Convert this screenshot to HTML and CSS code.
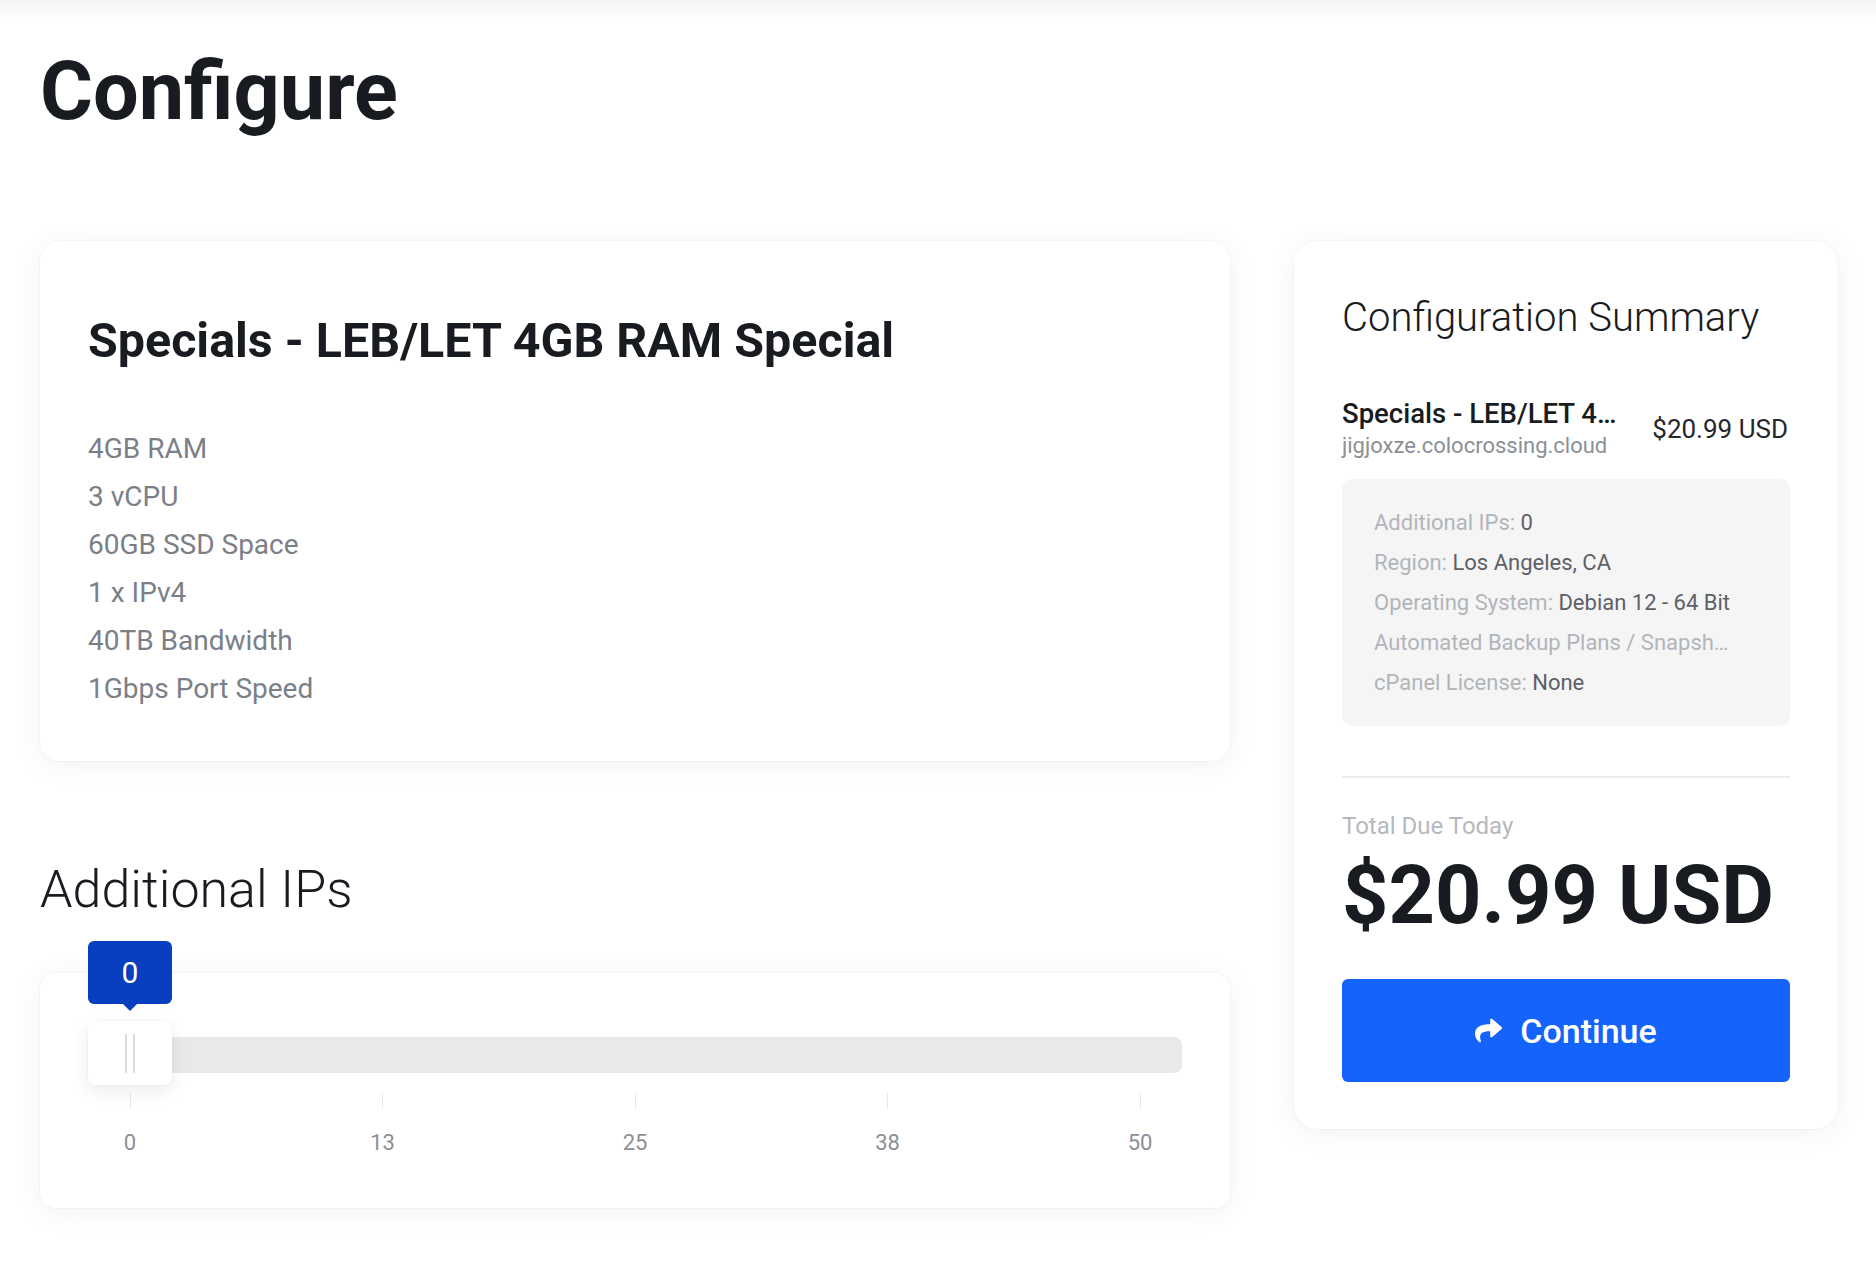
FILE: index.html
```html
<!DOCTYPE html>
<html lang="en">
<head>
<meta charset="utf-8">
<title>Configure</title>
<link rel="stylesheet" href="styles.css">
</head>
<body>
<div class="page">
  <h1 class="page-title">Configure</h1>
  <div class="layout">
    <main class="main-col">
      <section class="card product-card">
        <h2 class="product-title">Specials - LEB/LET 4GB RAM Special</h2>
        <ul class="features">
          <li>4GB RAM</li>
          <li>3 vCPU</li>
          <li>60GB SSD Space</li>
          <li>1 x IPv4</li>
          <li>40TB Bandwidth</li>
          <li>1Gbps Port Speed</li>
        </ul>
      </section>

      <h3 class="section-title">Additional IPs</h3>
      <section class="card slider-card">
        <div class="slider">
          <div class="track"></div>
          <div class="handle">
            <span class="grip"></span><span class="grip"></span>
            <div class="bubble">0</div>
          </div>
        </div>
        <div class="scale">
          <div class="tick"><span class="tick-line"></span><span class="tick-label">0</span></div>
          <div class="tick"><span class="tick-line"></span><span class="tick-label">13</span></div>
          <div class="tick"><span class="tick-line"></span><span class="tick-label">25</span></div>
          <div class="tick"><span class="tick-line"></span><span class="tick-label">38</span></div>
          <div class="tick"><span class="tick-line"></span><span class="tick-label">50</span></div>
        </div>
      </section>
    </main>

    <aside class="card summary">
      <h3 class="summary-title">Configuration Summary</h3>
      <div class="item">
        <div class="item-info">
          <div class="item-name">Specials - LEB/LET 4GB RAM Special</div>
          <div class="item-domain">jigjoxze.colocrossing.cloud</div>
        </div>
        <div class="item-price">$20.99 USD</div>
      </div>
      <div class="details">
        <div class="details-row">Additional IPs: <span class="details-value">0</span></div>
        <div class="details-row">Region: <span class="details-value">Los Angeles, CA</span></div>
        <div class="details-row">Operating System: <span class="details-value">Debian 12 - 64 Bit</span></div>
        <div class="details-row">Automated Backup Plans / Snapshots: <span class="details-value">None</span></div>
        <div class="details-row">cPanel License: <span class="details-value">None</span></div>
      </div>
      <div class="divider"></div>
      <div class="total-label">Total Due Today</div>
      <div class="total-amount">$20.99 USD</div>
      <button class="continue" type="button">
        <svg class="continue-icon" viewBox="0 0 512 512" aria-hidden="true"><path d="M503.691 189.836L327.687 37.851C312.281 24.546 288 35.347 288 56.015v80.053C127.371 137.907 0 170.1 0 322.326c0 61.441 39.581 122.309 83.333 154.132 13.653 9.931 33.111-2.533 28.077-18.631C66.066 312.814 132.917 274.316 288 272.085V360c0 20.7 24.3 31.453 39.687 18.164l176.004-152c11.071-9.562 11.086-26.753 0-36.328z"/></svg>
        <span>Continue</span>
      </button>
    </aside>
  </div>
</div>
</body>
</html>
```

FILE: styles.css
```css
* { box-sizing: border-box; }

body {
  margin: 0;
  background: #ffffff;
  font-family: Roboto, "Noto Sans", "Liberation Sans", sans-serif;
  color: #181b20;
}

.page {
  padding: 0 38px 60px 40px;
  background: linear-gradient(#f3f3f3, #ffffff 20px) no-repeat;
}

.page-title {
  margin: 0;
  padding-top: 43px;
  font-size: 81px;
  line-height: 98px;
  font-weight: 700;
}

.layout {
  display: flex;
  align-items: flex-start;
  gap: 64px;
  margin-top: 100px;
}

.main-col {
  flex: 1;
  min-width: 0;
}

.card {
  background: #ffffff;
  border-radius: 20px;
  box-shadow: 0 0 0 1px rgba(0, 0, 0, 0.025), 0 4px 30px rgba(0, 0, 0, 0.055);
}

/* product card */
.product-card {
  padding: 70px 48px 48px;
}

.product-title {
  margin: 0;
  font-size: 48.4px;
  line-height: 60px;
  font-weight: 700;
}

.features {
  list-style: none;
  margin: 54px 0 0;
  padding: 0;
  font-size: 28px;
  line-height: 48px;
  color: #7b8088;
}

/* additional IPs */
.section-title {
  margin: 98px 0 0;
  font-size: 52px;
  line-height: 62px;
  font-weight: 300;
}

.slider-card {
  margin-top: 52px;
  padding: 48px 48px 51px;
  border-radius: 16px;
}

.slider {
  position: relative;
  padding: 16px 0 12px;
}

.track {
  height: 36px;
  background: #e8e9eb;
  border-radius: 8px;
}

.handle {
  position: absolute;
  left: 0;
  top: 0;
  width: 84px;
  height: 64px;
  background: #ffffff;
  border-radius: 8px;
  box-shadow: 0 0 0 1px rgba(0, 0, 0, 0.02), 0 6px 18px rgba(0, 0, 0, 0.08);
  display: flex;
  align-items: center;
  justify-content: center;
  gap: 6px;
}

.grip {
  width: 2px;
  height: 39px;
  background: #dcdde0;
}

.bubble {
  position: absolute;
  left: 0;
  bottom: calc(100% + 17px);
  width: 84px;
  height: 63px;
  background: #083fc1;
  color: #ffffff;
  border-radius: 6px;
  font-size: 30px;
  display: flex;
  align-items: center;
  justify-content: center;
}

.bubble::after {
  content: "";
  position: absolute;
  left: 50%;
  top: 100%;
  margin-left: -7px;
  border-left: 7px solid transparent;
  border-right: 7px solid transparent;
  border-top: 7px solid #083fc1;
}

.scale {
  display: flex;
  justify-content: space-between;
  margin-top: 8px;
}

.tick {
  width: 84px;
  display: flex;
  flex-direction: column;
  align-items: center;
}

.tick-line {
  width: 1px;
  height: 15px;
  background: #e6e7e9;
}

.tick-label {
  margin-top: 21px;
  font-size: 22px;
  line-height: 28px;
  color: #8c9096;
}

/* summary */
.summary {
  width: 544px;
  flex: none;
  padding: 53px 48px 47px;
  border-radius: 24px;
}

.summary-title {
  margin: 0;
  font-size: 40px;
  line-height: 48px;
  font-weight: 300;
}

.item {
  display: flex;
  align-items: center;
  gap: 28px;
  margin-top: 55px;
}

.item-info {
  flex: 1;
  min-width: 0;
}

.item-name {
  font-size: 27.5px;
  line-height: 34px;
  font-weight: 500;
  white-space: nowrap;
  overflow: hidden;
  text-overflow: ellipsis;
}

.item-domain {
  margin-top: 1px;
  font-size: 22px;
  line-height: 28px;
  color: #8b9096;
}

.item-price {
  flex: none;
  margin-right: 2px;
  font-size: 26px;
  line-height: 34px;
  color: #24272b;
}

.details {
  margin-top: 19px;
  background: #f5f5f6;
  border-radius: 10px;
  padding: 24px 54px 23px 32px;
  font-size: 22px;
  line-height: 40px;
  color: #b1b5ba;
}

.details-row {
  white-space: nowrap;
  overflow: hidden;
  text-overflow: ellipsis;
}

.details-value {
  color: #5d6167;
}

.divider {
  margin-top: 50px;
  height: 2px;
  background: #ececee;
}

.total-label {
  margin-top: 34px;
  font-size: 24px;
  line-height: 28px;
  color: #b6b9be;
}

.total-amount {
  margin-top: 7px;
  font-size: 81px;
  line-height: 98px;
  font-weight: 700;
}

.continue {
  margin-top: 34px;
  width: 100%;
  height: 103px;
  border: 0;
  border-radius: 6px;
  background: #1463fa;
  color: #ffffff;
  font-family: inherit;
  font-size: 34px;
  font-weight: 500;
  display: flex;
  align-items: center;
  justify-content: center;
  gap: 18px;
}

.continue-icon {
  width: 27px;
  height: 27px;
  fill: #ffffff;
}
```
